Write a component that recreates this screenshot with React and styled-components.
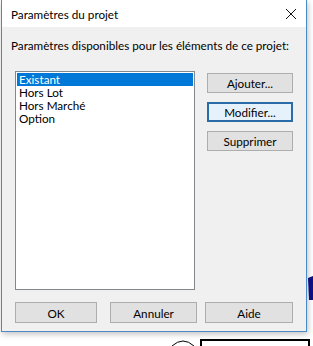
import React, { useState } from "react";
import styled, { createGlobalStyle } from "styled-components";

const Global = createGlobalStyle`
  html, body {
    margin: 0;
    padding: 0;
    background: #ffffff;
  }
  body {
    font-family: Lato, "Noto Sans", sans-serif;
    font-size: 11.7px;
    color: #000;
  }
`;

const Page = styled.div`
  position: relative;
  width: 313px;
  height: 346px;
  overflow: hidden;
  background: #fff;
`;

const Backdrop = styled.svg`
  position: absolute;
  left: 0;
  top: 0;
`;

const Dialog = styled.div`
  position: relative;
  margin-left: 1px;
  width: 304px;
  height: 331px;
  border: 1px solid #4a8ac9;
  border-top: none;
  background: #f0f0f0;
  box-shadow: 1px 2px 6px rgba(0, 0, 0, 0.25);
  display: flex;
  flex-direction: column;
`;

const TitleBar = styled.div`
  height: 27px;
  background: #fff;
  display: flex;
  align-items: center;
  justify-content: space-between;
  padding: 0 9px 0 9px;
`;

const Title = styled.span`
  line-height: 16px;
`;

const Body = styled.div`
  flex: 1;
  display: flex;
  flex-direction: column;
  padding: 10px 13px 8px 13px;
`;

const Label = styled.div`
  line-height: 16px;
  margin-left: -4px;
  white-space: nowrap;
`;

const Main = styled.div`
  display: flex;
  gap: 12px;
  margin-top: 18px;
`;

const ListBox = styled.ul`
  list-style: none;
  margin: 0;
  padding: 1px;
  width: 177px;
  height: 215px;
  background: #fff;
  border: 1px solid #828790;
`;

const Item = styled.li`
  height: 13px;
  line-height: 13px;
  padding-left: 2px;
  background: ${(p) => (p.$selected ? "#0078d7" : "transparent")};
  color: ${(p) => (p.$selected ? "#fff" : "#000")};
  white-space: nowrap;
`;

const Side = styled.div`
  display: flex;
  flex-direction: column;
  gap: 9px;
  padding-top: 2px;
`;

const Button = styled.button`
  font-family: inherit;
  font-size: 11.7px;
  color: #000;
  width: ${(p) => p.$w || 86}px;
  height: ${(p) => p.$h || 20}px;
  margin-left: ${(p) => p.$ml || 0}px;
  padding: 0;
  background: ${(p) => (p.$default ? "#e5f1fb" : "#e1e1e1")};
  border: ${(p) => (p.$default ? "2px solid #2a6ca8" : "1px solid #adadad")};
  box-sizing: border-box;
  border-radius: 0;
`;

const Footer = styled.div`
  margin-top: auto;
  display: flex;
`;

const items = ["Existant", "Hors Lot", "Hors Marché", "Option"];

export default function App() {
  const [selected, setSelected] = useState(0);
  return (
    <Page>
      <Global />
      <Backdrop width="313" height="346" viewBox="0 0 313 346">
        <path d="M308 278 L313 276 L313 300 L309 300 Z" fill="#10108a" />
        <path d="M172 346 Q183 336 194 346" fill="none" stroke="#000" strokeWidth="1" />
        <rect x="201" y="340" width="108" height="10" fill="#fff" stroke="#000" strokeWidth="2" />
      </Backdrop>
      <Dialog>
        <TitleBar>
          <Title>Paramètres du projet</Title>
          <svg width="12" height="12" viewBox="0 0 12 12">
            <path d="M1 1 L11 11 M11 1 L1 11" stroke="#111" strokeWidth="1" />
          </svg>
        </TitleBar>
        <Body>
          <Label>Paramètres disponibles pour les éléments de ce projet:</Label>
          <Main>
            <ListBox>
              {items.map((it, i) => (
                <Item key={it} $selected={i === selected} onClick={() => setSelected(i)}>
                  {it}
                </Item>
              ))}
            </ListBox>
            <Side>
              <Button>Ajouter...</Button>
              <Button $default>Modifier...</Button>
              <Button>Supprimer</Button>
            </Side>
          </Main>
          <Footer>
            <Button $w={83} $h={21}>OK</Button>
            <Button $w={88} $h={21} $ml={13}>Annuler</Button>
            <Button $w={89} $h={21} $ml={8}>Aide</Button>
          </Footer>
        </Body>
      </Dialog>
    </Page>
  );
}
